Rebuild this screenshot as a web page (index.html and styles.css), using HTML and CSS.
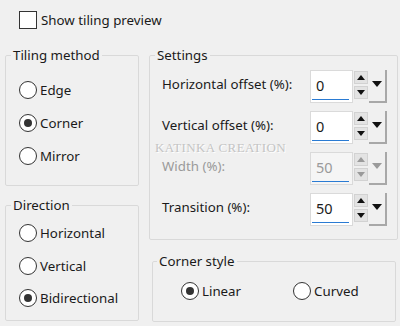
FILE: index.html
```html
<!DOCTYPE html>
<html lang="en">
<head>
  <meta charset="UTF-8">
  <title>Tiling</title>
  <link rel="stylesheet" href="styles.css">
</head>
<body>
  <div class="top">
    <label class="check"><input type="checkbox"> Show tiling preview</label>
  </div>

  <div class="columns">
    <div class="col left">
      <fieldset class="group tiling">
        <legend>Tiling method</legend>
        <div class="inner">
          <label class="opt"><input type="radio" name="method"> Edge</label>
          <label class="opt"><input type="radio" name="method" checked> Corner</label>
          <label class="opt"><input type="radio" name="method"> Mirror</label>
        </div>
      </fieldset>

      <fieldset class="group direction">
        <legend>Direction</legend>
        <div class="inner">
          <label class="opt"><input type="radio" name="dir"> Horizontal</label>
          <label class="opt"><input type="radio" name="dir"> Vertical</label>
          <label class="opt"><input type="radio" name="dir" checked> Bidirectional</label>
        </div>
      </fieldset>
    </div>

    <div class="col right">
      <fieldset class="group settings">
        <legend>Settings</legend>
        <div class="inner">
          <div class="row">
            <span class="lbl">Horizontal offset (%):</span>
            <div class="spin">
              <div class="field"><span class="val">0</span><span class="bar"></span></div>
              <div class="btns"><span class="up"></span><span class="down"></span></div>
              <div class="drop"><span class="down"></span></div>
            </div>
          </div>
          <div class="row">
            <span class="lbl">Vertical offset (%):</span>
            <div class="spin">
              <div class="field"><span class="val">0</span><span class="bar"></span></div>
              <div class="btns"><span class="up"></span><span class="down"></span></div>
              <div class="drop"><span class="down"></span></div>
            </div>
          </div>
          <div class="row disabled">
            <span class="lbl">Width (%):</span>
            <div class="spin">
              <div class="field"><span class="val">50</span><span class="bar"></span></div>
              <div class="btns"><span class="up"></span><span class="down"></span></div>
              <div class="drop"><span class="down"></span></div>
            </div>
          </div>
          <div class="row">
            <span class="lbl">Transition (%):</span>
            <div class="spin">
              <div class="field"><span class="val">50</span><span class="bar"></span></div>
              <div class="btns"><span class="up"></span><span class="down"></span></div>
              <div class="drop"><span class="down"></span></div>
            </div>
          </div>
        </div>
        <div class="mark">KATINKA CREATION</div>
      </fieldset>

      <fieldset class="group corner">
        <legend>Corner style</legend>
        <div class="inner pair">
          <label class="opt"><input type="radio" name="corner" checked> Linear</label>
          <label class="opt"><input type="radio" name="corner"> Curved</label>
        </div>
      </fieldset>
    </div>
  </div>
</body>
</html>
```

FILE: styles.css
```css
* {
  box-sizing: border-box;
}
body {
  margin: 0;
  background: #f0f0f0;
  font-family: "Noto Sans", sans-serif;
  font-size: 13.3px;
  color: #1a1a1a;
  width: 400px;
  height: 326px;
  overflow: hidden;
}

.top {
  padding: 11px 0 0 19px;
  height: 45px;
}
.check {
  display: flex;
  align-items: center;
  gap: 4px;
  height: 18px;
}
.check input {
  appearance: none;
  margin: 0;
  width: 18px;
  height: 18px;
  border: 1px solid #333;
  background: #fff;
}

.columns {
  display: flex;
  padding-left: 5px;
}
.left {
  width: 134px;
}
.right {
  width: 249px;
  margin-left: 10px;
}

.group {
  margin: 0;
  padding: 0;
  border: 1px solid #d9d9d9;
  border-radius: 2px;
  position: relative;
}
.group legend {
  padding: 0 2px;
  margin-left: 5px;
  line-height: 20px;
  color: #1a1a1a;
}

.opt {
  display: flex;
  align-items: center;
  gap: 3px;
}
.opt input {
  appearance: none;
  margin: 0;
  width: 18px;
  height: 18px;
  border: 1px solid #333;
  border-radius: 50%;
  background: #fff;
  display: grid;
  place-items: center;
}
.opt input:checked::before {
  content: "";
  width: 8px;
  height: 8px;
  border-radius: 50%;
  background: #333;
}

.tiling .inner {
  padding: 8px 0 13px 13px;
}
.tiling .opt {
  height: 33px;
}

.direction {
  margin-top: 9px;
}
.direction .inner {
  padding: 2px 0 5px 13px;
}
.direction .opt {
  height: 32.5px;
}

.settings .inner {
  padding: 1px 10px 9px 12px;
}
.row {
  display: flex;
  align-items: center;
  justify-content: space-between;
  height: 41px;
}
.lbl {
  margin-bottom: 5px;
}
.spin {
  display: flex;
  height: 33px;
}
.field {
  width: 43px;
  background: #fff;
  border: 1px solid #dadada;
  display: flex;
  flex-direction: column;
  padding: 0 0 2px 5px;
}
.val {
  font-size: 14.5px;
  line-height: 28px;
}
.bar {
  margin-top: auto;
  width: 37px;
  height: 3px;
  margin-left: -4px;
  background: #2a7bd3;
}
.btns {
  width: 14px;
  margin-left: 1px;
  display: flex;
  flex-direction: column;
  gap: 2px;
  padding-top: 1px;
}
.btns span {
  height: 13px;
  background: #e3e3e3;
  border: 1px solid #d2d2d2;
  display: grid;
  place-items: center;
}
.up::before,
.down::before {
  content: "";
  border-left: 4px solid transparent;
  border-right: 4px solid transparent;
}
.up::before {
  border-bottom: 5px solid #111;
}
.down::before {
  border-top: 5px solid #111;
}
.drop {
  width: 18px;
  margin-left: 1px;
  border-right: 2px solid #a8a8a8;
  border-bottom: 2px solid #a8a8a8;
  display: grid;
  place-items: center;
}
.drop span {
  display: grid;
  place-items: center;
  margin-bottom: 4px;
}
.drop span::before {
  border-left-width: 5px;
  border-right-width: 5px;
  border-top-width: 6px;
}

.disabled .lbl,
.disabled .val {
  color: #9a9a9a;
}
.disabled .field {
  background: #f5f5f5;
}
.disabled .up::before {
  border-bottom-color: #9a9a9a;
}
.disabled .down::before {
  border-top-color: #9a9a9a;
}

.mark {
  position: absolute;
  left: 5px;
  top: 75px;
  font-family: "Liberation Serif", serif;
  font-size: 13px;
  color: #c4c4c4;
  text-shadow: 1px 1px 0 #fff;
  letter-spacing: 0.4px;
}

.corner {
  margin: 11px 2px 0 3px;
}
.corner legend {
  margin-left: 4px;
}
.pair {
  display: flex;
  gap: 52px;
  padding: 5px 0 15px 28px;
}
.pair .opt {
  height: 30px;
}
```
